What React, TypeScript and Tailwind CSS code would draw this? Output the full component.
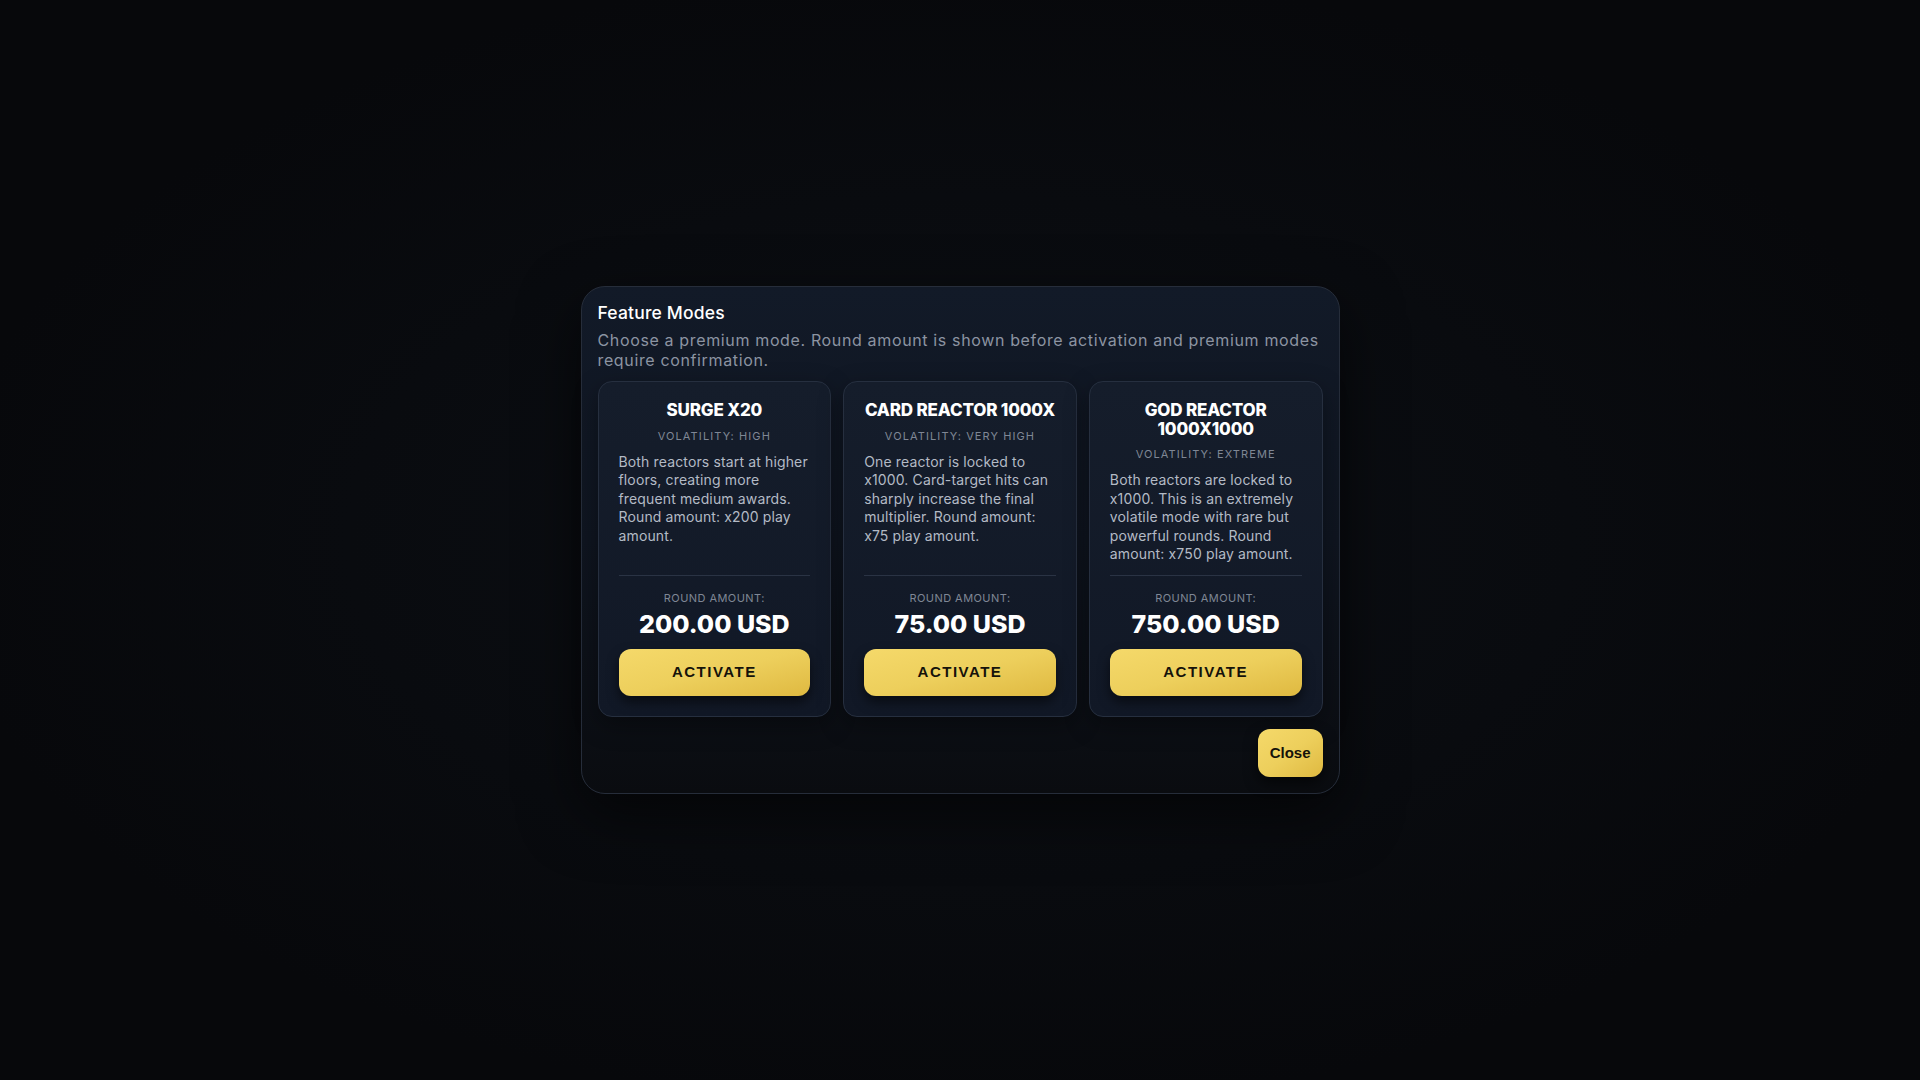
import React from "react";

type Mode = {
  title: string;
  volatility: string;
  description: string;
  amount: string;
};

const modes: Mode[] = [
  {
    title: "Surge x20",
    volatility: "Volatility: High",
    description:
      "Both reactors start at higher floors, creating more frequent medium awards. Round amount: x200 play amount.",
    amount: "200.00 USD",
  },
  {
    title: "Card Reactor 1000x",
    volatility: "Volatility: Very High",
    description:
      "One reactor is locked to x1000. Card-target hits can sharply increase the final multiplier. Round amount: x75 play amount.",
    amount: "75.00 USD",
  },
  {
    title: "God Reactor 1000x1000",
    volatility: "Volatility: Extreme",
    description:
      "Both reactors are locked to x1000. This is an extremely volatile mode with rare but powerful rounds. Round amount: x750 play amount.",
    amount: "750.00 USD",
  },
];

function ModeCard({ mode }: { mode: Mode }) {
  return (
    <div className="flex flex-col items-center rounded-[14px] border border-[#262f3f] bg-gradient-to-b from-[#151d2b] to-[#111826] px-5 pt-[19px] pb-5 text-center shadow-[0_8px_24px_rgba(0,0,0,0.35)]">
      <h3 className="text-[17px] font-extrabold uppercase leading-[18.5px] tracking-[-0.01em] text-white">
        {mode.title}
      </h3>
      <div className="mt-[9px] text-[11px] uppercase leading-[15px] tracking-[0.1em] text-[#7f8795]">
        {mode.volatility}
      </div>
      <p className="mt-[9px] w-full text-left text-[14px] leading-[18.5px] tracking-[0.01em] text-[#b3bac5]">
        {mode.description}
      </p>

      {/* bottom block stays aligned across cards */}
      <div className="mt-auto w-full pt-[11px]">
        <div className="border-t border-[#2a3344] pt-[15px]">
          <div className="text-[11px] uppercase leading-[15px] tracking-[0.04em] text-[#7f8795]">
            Round amount:
          </div>
          <div className="mt-1 text-[25px] font-extrabold leading-[28px] text-white">
            {mode.amount}
          </div>
          <button className="mt-[11px] h-[47px] w-full rounded-[12px] bg-gradient-to-br from-[#f5d96a] via-[#edcf5c] to-[#dfb940] font-['Liberation_Sans',Arial,sans-serif] text-[15px] font-bold uppercase tracking-[0.1em] text-[#15120a] shadow-[0_6px_12px_rgba(0,0,0,0.55)]">
            Activate
          </button>
        </div>
      </div>
    </div>
  );
}

export default function App() {
  return (
    <div className="flex min-h-screen w-full items-center justify-center bg-[#07090c] bg-[radial-gradient(ellipse_at_50%_50%,#0c0f14_0%,#090b0f_45%,#07080b_75%)] font-['Inter','Noto_Sans',sans-serif]">
      <div className="flex w-[759px] flex-col rounded-[24px] border border-[#262d3a] bg-gradient-to-b from-[#121a28] via-[#0f1520] to-[#0a0c10] p-4 shadow-[0_20px_60px_rgba(0,0,0,0.6)]">
        <h2 className="text-[17.5px] font-medium leading-5 tracking-[0.01em] text-white">
          Feature Modes
        </h2>
        <p className="mt-[7px] text-[16px] leading-5 tracking-[0.04em] text-[#8c94a2]">
          Choose a premium mode. Round amount is shown before activation and premium modes
          require confirmation.
        </p>

        <div className="mt-[11px] grid grid-cols-3 gap-3">
          {modes.map((mode) => (
            <ModeCard key={mode.title} mode={mode} />
          ))}
        </div>

        <button className="mt-3 h-[48px] self-end rounded-[12px] bg-gradient-to-br from-[#f5d96a] via-[#edcf5c] to-[#dfb940] px-3 font-['Liberation_Sans',Arial,sans-serif] text-[15px] font-bold text-[#15120a] shadow-[0_6px_14px_rgba(0,0,0,0.6)]">
          Close
        </button>
      </div>
    </div>
  );
}
